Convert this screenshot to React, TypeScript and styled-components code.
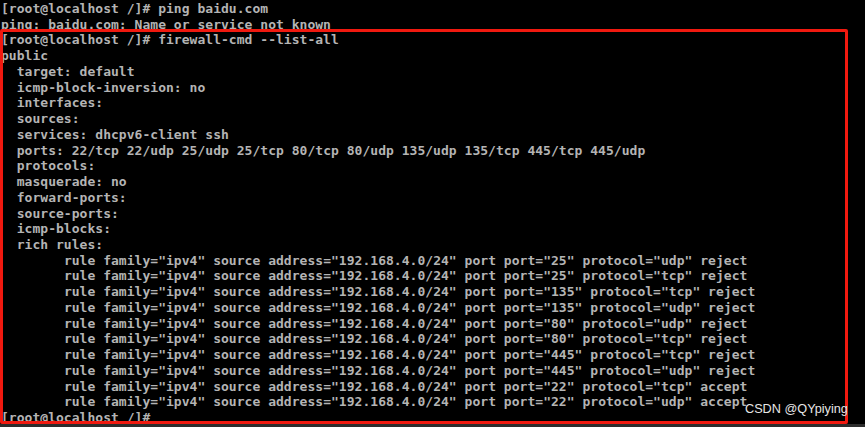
import React from "react";
import styled, { createGlobalStyle } from "styled-components";

const GlobalStyle = createGlobalStyle`
  html, body {
    margin: 0;
    padding: 0;
    background: #000;
  }
`;

const Screen = styled.div`
  position: relative;
  width: 865px;
  height: 427px;
  overflow: hidden;
  background: #000;
  display: flex;
  flex-direction: column;
`;

const Terminal = styled.div`
  flex: 1;
  padding: 1px 0 0 1px;
  overflow: hidden;
  font-family: "DejaVu Sans Mono", "Liberation Mono", monospace;
  font-weight: bold;
  font-size: 13px;
  letter-spacing: 0.03px;
  line-height: 15.73px;
  color: #b4b4b4;
`;

const Line = styled.div<{ $indent?: number }>`
  white-space: pre;
  padding-left: ${(p) => (p.$indent ?? 0) * 7.86}px;
`;

const StatusStrip = styled.div`
  height: 3px;
  background: #2d2d2d;
  flex: none;
`;

const Highlight = styled.div`
  position: absolute;
  left: 0;
  top: 29px;
  width: 848px;
  height: 395px;
  box-sizing: border-box;
  border: 3px solid #f0190f;
  border-radius: 2px;
  pointer-events: none;
`;

const Watermark = styled.div`
  position: absolute;
  left: 745px;
  top: 402px;
  font-family: "Liberation Sans", Arial, sans-serif;
  font-size: 12.7px;
  line-height: 15px;
  color: #e6e6e6;
  text-shadow: 0 0 1px rgba(0, 0, 0, 0.6);
  white-space: nowrap;
`;

const header: { text: string; indent?: number }[] = [
  { text: "[root@localhost /]# ping baidu.com" },
  { text: "ping: baidu.com: Name or service not known" },
  { text: "[root@localhost /]# firewall-cmd --list-all" },
  { text: "public" },
  { text: "target: default", indent: 2 },
  { text: "icmp-block-inversion: no", indent: 2 },
  { text: "interfaces:", indent: 2 },
  { text: "sources:", indent: 2 },
  { text: "services: dhcpv6-client ssh", indent: 2 },
  {
    text: "ports: 22/tcp 22/udp 25/udp 25/tcp 80/tcp 80/udp 135/udp 135/tcp 445/tcp 445/udp",
    indent: 2,
  },
  { text: "protocols:", indent: 2 },
  { text: "masquerade: no", indent: 2 },
  { text: "forward-ports:", indent: 2 },
  { text: "source-ports:", indent: 2 },
  { text: "icmp-blocks:", indent: 2 },
  { text: "rich rules:", indent: 2 },
];

const rules: [string, string, string][] = [
  ["25", "udp", "reject"],
  ["25", "tcp", "reject"],
  ["135", "tcp", "reject"],
  ["135", "udp", "reject"],
  ["80", "udp", "reject"],
  ["80", "tcp", "reject"],
  ["445", "tcp", "reject"],
  ["445", "udp", "reject"],
  ["22", "tcp", "accept"],
  ["22", "udp", "accept"],
];

export default function App() {
  return (
    <>
      <GlobalStyle />
      <Screen>
        <Terminal>
          {header.map((l, i) => (
            <Line key={i} $indent={l.indent}>
              {l.text}
            </Line>
          ))}
          {rules.map(([port, proto, action], i) => (
            <Line key={`r${i}`} $indent={8}>
              {`rule family="ipv4" source address="192.168.4.0/24" port port="${port}" protocol="${proto}" ${action}`}
            </Line>
          ))}
          <Line>[root@localhost /]#</Line>
        </Terminal>
        <StatusStrip />
        <Highlight />
        <Watermark>CSDN @QYpiying</Watermark>
      </Screen>
    </>
  );
}
